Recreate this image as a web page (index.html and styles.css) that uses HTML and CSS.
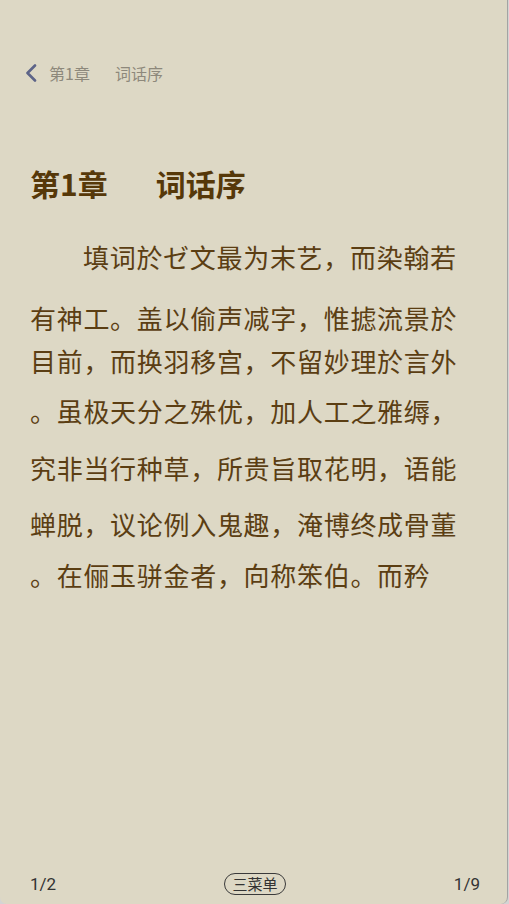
FILE: index.html
```html
<!DOCTYPE html>
<html>
  <head>
    <title>词话序</title>
    <link rel="stylesheet" href="styles.css">
  </head>
  <body>
    <div class="page">
      <div class="top-bar">
        <svg class="back-icon" width="12" height="18" viewBox="0 0 12 18">
          <path d="M10 1.5 L2.5 9 L10 16.5" fill="none" stroke="#5d6488" stroke-width="2.6" stroke-linecap="round" stroke-linejoin="round"/>
        </svg>
        <span class="top-chapter">第1章</span>
        <span class="top-title">词话序</span>
      </div>

      <p class="chapter-title"><span class="chapter-num">第1章</span>词话序</p>

      <div class="content">
        <p class="line first-line">填词於ゼ文最为末艺，而染翰若</p>
        <p class="line">有神工。盖以偷声减字，惟摅流景於</p>
        <p class="line">目前，而换羽移宫，不留妙理於言外</p>
        <p class="line">。虽极天分之殊优，加人工之雅缛，</p>
        <p class="line">究非当行种草，所贵旨取花明，语能</p>
        <p class="line">蝉脱，议论例入鬼趣，淹博终成骨董</p>
        <p class="line">。在俪玉骈金者，向称笨伯。而矜</p>
      </div>

      <div class="bottom-bar">
        <span class="page-num">1/2</span>
        <span class="menu-button">三菜单</span>
        <span class="page-num">1/9</span>
      </div>
    </div>
  </body>
</html>
```

FILE: styles.css
```css
body {
  margin: 0;
  background-color: #d4d4d4;
  font-family: "Noto Sans CJK SC", "Noto Sans", sans-serif;
}

.page {
  box-sizing: border-box;
  width: 508px;
  height: 904px;
  background-color: #ddd8c5;
  border-right: 1px solid #a3a3a3;
  border-radius: 0 0 7px 7px;
  display: flex;
  flex-direction: column;
}

.top-bar {
  display: flex;
  align-items: center;
  height: 24px;
  margin-top: 61px;
  padding-left: 25px;
  font-size: 16px;
  line-height: 24px;
  color: #8d887b;
}

.back-icon {
  margin-right: 12px;
}

.top-chapter {
  margin-right: 25px;
}

.chapter-title {
  margin: 83px 0 0 30px;
  font-size: 30px;
  line-height: 30px;
  font-weight: bold;
  color: #563809;
}

.chapter-num {
  margin-right: 48px;
}

.content {
  padding-left: 30px;
}

.line {
  margin: 0;
  height: 40px;
  font-size: 26px;
  line-height: 40px;
  letter-spacing: 0.7px;
  color: #5b3e13;
  white-space: nowrap;
}

.first-line {
  text-indent: 53px;
  margin-top: 39px;
}

.line:nth-child(2) { margin-top: 21px; }
.line:nth-child(3) { margin-top: 3px; }
.line:nth-child(4) { margin-top: 10px; }
.line:nth-child(5) { margin-top: 17px; }
.line:nth-child(6) { margin-top: 16px; }
.line:nth-child(7) { margin-top: 11px; }

.bottom-bar {
  margin-top: auto;
  margin-bottom: 9px;
  height: 22px;
  padding: 0 27px 0 30px;
  display: flex;
  justify-content: space-between;
  align-items: center;
}

.page-num {
  font-family: Roboto, "Noto Sans", sans-serif;
  font-size: 17px;
  color: #333333;
}

.menu-button {
  box-sizing: border-box;
  height: 22px;
  padding: 0 7px;
  border: 1px solid #3a3a3a;
  border-radius: 11px;
  font-size: 15px;
  line-height: 20px;
  color: #333333;
}
```
